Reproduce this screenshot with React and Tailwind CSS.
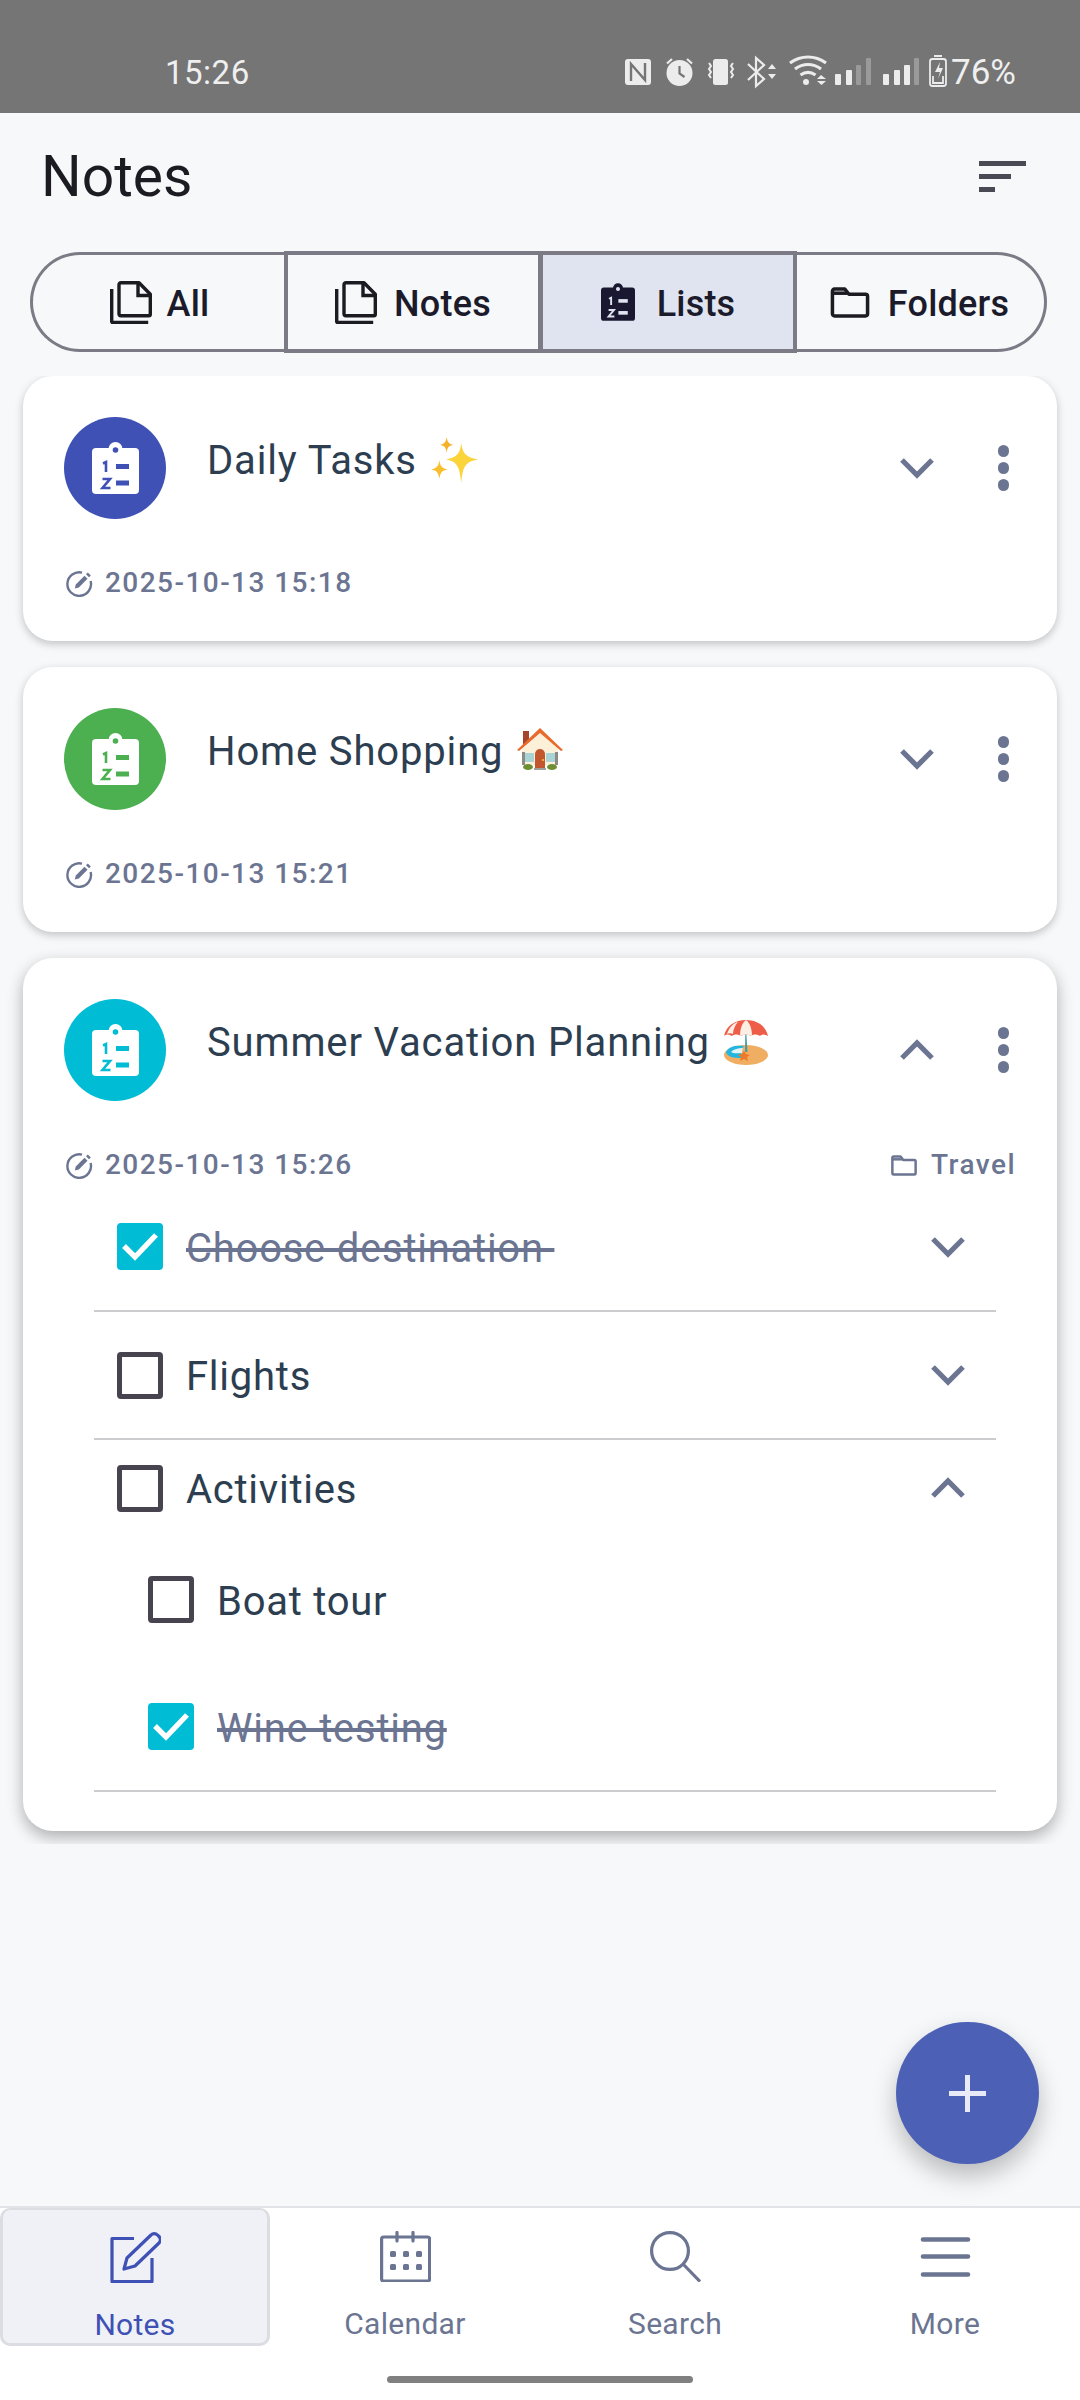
import React from "react";

const C = "#6b7592";

function ClipIcon({ fg, bg, w = 47, h = 52 }) {
  return (
    <svg width={w} height={h} viewBox="0 0 47 52" fill="none">
      <rect x="0" y="6" width="47" height="46" rx="4" fill={fg} />
      <circle cx="23.5" cy="7" r="7" fill={fg} />
      <circle cx="23.5" cy="8" r="2.8" fill={bg} />
      <path d="M11 21.5l3-1.5v10" stroke={bg} strokeWidth="2.6" />
      <path d="M10.5 37h7.5l-7.5 9h8" stroke={bg} strokeWidth="2.6" />
      <rect x="24" y="22" width="13" height="5" fill={bg} />
      <rect x="24" y="38.5" width="13" height="5" fill={bg} />
    </svg>
  );
}

function DocIcon() {
  return (
    <svg width="42" height="43" viewBox="0 0 42 43" fill="none" stroke="#1c1b21" strokeWidth="3.4">
      <path d="M1.7 8v32.5a1 1 0 0 0 1 1h35.5" />
      <path d="M11 1.7h18l11.3 11.5v20a1.6 1.6 0 0 1-1.6 1.6H11a2 2 0 0 1-2-2V3.7a2 2 0 0 1 2-2z" strokeLinejoin="round" />
      <path d="M28 2v12.5h12" />
    </svg>
  );
}

function FolderIcon({ color = "#1c1b21", w = 40, h = 31, sw = 3.4 }) {
  return (
    <svg width={w} height={h} viewBox="0 0 38 30" fill="none" stroke={color} strokeWidth={sw} strokeLinejoin="round">
      <path d="M2 4a2 2 0 0 1 2-2h10l4 5h16a2 2 0 0 1 2 2v17a2 2 0 0 1-2 2H4a2 2 0 0 1-2-2z" />
      <path d="M3 6h14" />
    </svg>
  );
}

function Segment({ icon, label, className, gap = "gap-[15px]" }) {
  return (
    <div className={`h-[100px] flex items-center justify-center border-[3px] border-[#7b7a85] ${gap} ${className}`}>
      {icon}
      <span className="mt-[4px] text-[36px] font-medium text-[#1c1b2b] leading-none tracking-[0.2px]">{label}</span>
    </div>
  );
}

function Chevron({ up }) {
  return (
    <svg width="34" height="22" viewBox="0 0 34 22" fill="none" stroke={C} strokeWidth="5.2" className="shrink-0">
      <path d={up ? "M2 19L17 4l15 15" : "M2 3l15 15L32 3"} />
    </svg>
  );
}

function Dots() {
  return (
    <div className="flex flex-col gap-[5.5px] shrink-0">
      <div className="w-[11.5px] h-[11.5px] rounded-full bg-[#6b7592]" />
      <div className="w-[11.5px] h-[11.5px] rounded-full bg-[#6b7592]" />
      <div className="w-[11.5px] h-[11.5px] rounded-full bg-[#6b7592]" />
    </div>
  );
}

function EditedIcon() {
  return (
    <svg width="27" height="27" viewBox="0 0 27 27" fill="none" stroke={C} className="shrink-0">
      <path d="M16 2.600A11.800 11.800 0 1 0 24.600 11" strokeWidth="2.400" />
      <path d="M8.800 18.400l1-4L18.500 5.700l3 3-8.700 8.700z" fill={C} stroke="none" />
      <path d="M20 4.200l1.800-1.800 3 3-1.800 1.800z" fill={C} stroke="none" />
    </svg>
  );
}

function Sparkles() {
  return (
    <svg width="48" height="46" viewBox="0 0 46 44">
      <path d="M29 6c1.3 10 4.5 13.4 16 15.5C33.500 23.600 30.600 27 29 44c-1.600-17-4.500-20.400-14.500-22.500C25 19.400 27.700 16 29 6z" fill="#fbd43c" />
      <path d="M15 0c.8 5 2 6.500 6.500 7.500C17 8.500 15.800 10 15 15c-.8-5-2-6.500-6.500-7.500C13 6.500 14.200 5 15 0z" fill="#f6b12a" />
      <path d="M8 22c.9 6 2.300 7.800 8 9-5.700 1.200-7.100 3-8 9-.9-6-2.300-7.800-8-9 5.700-1.200 7.100-3 8-9z" fill="#f8bf2f" />
    </svg>
  );
}

function House() {
  return (
    <svg width="46" height="42" viewBox="0 0 46 42">
      <rect x="6" y="3" width="6" height="14" fill="#a5452a" />
      <path d="M5 20L23 4l18 16v17H5z" fill="#fdf0d8" />
      <rect x="5" y="24" width="3" height="13" fill="#8c8a82" />
      <rect x="38" y="24" width="3" height="13" fill="#8c8a82" />
      <path d="M0 22L23 0l23 22-2 1L23 5 2 23z" fill="#ea6a2d" />
      <rect x="8" y="25" width="9" height="9" fill="#a8d4d8" />
      <rect x="29" y="25" width="9" height="9" fill="#a8d4d8" />
      <path d="M18 40V26a5 5 0 0 1 10 0v14z" fill="#c2562f" />
      <circle cx="26" cy="32" r="1" fill="#f8c63d" />
      <ellipse cx="11" cy="39" rx="5" ry="3" fill="#6c8f33" />
      <ellipse cx="35" cy="39" rx="5" ry="3" fill="#6c8f33" />
      <rect x="17" y="40" width="12" height="2" fill="#a0a09a" />
    </svg>
  );
}

function Beach() {
  return (
    <svg width="44" height="46" viewBox="0 0 44 46">
      <ellipse cx="22" cy="36" rx="22" ry="10" fill="#f0ae62" />
      <path d="M2 33c3-6 10-7 18-6-3 3-2 7-3 12C10 39 3 38 2 33z" fill="#25b6e0" />
      <path d="M7 33c3-3 7-4 12-4-1 2-1 3-1 5-4 0-8 1-11-1z" fill="#e4f4f4" />
      <path d="M21.500 0l-.5 33h2.500z" fill="#4a9aa4" />
      <path d="M0 17C2 7 11 1 22 1s20 6 22 16c-3-2-6-2-8 0-3-2-7-2-9 0-3-2-7-2-10 0-3-2-7-2-9 0-3-2-6-2-8 0z" fill="#ee5d47" />
      <path d="M16 17c0-7 2-13 6-16 4 3 6 9 6 16-4-2-8-2-12 0zM3 15C5 9 9 4 14 3c-3 3-5 8-5 12-2-1-4-1-6 0z" fill="#fbeee2" />
      <path d="M14 36l4-1 2-3 2 3 4 1-3 2 1 4-4-2-4 2 1-4z" fill="#ee7a28" />
    </svg>
  );
}

function Card({ color, title, emoji, date, expanded, folder, children }) {
  return (
    <div className={`bg-white rounded-[30px] pt-[41px] pl-[41px] pr-[47px] mx-[23px] ${expanded ? "pb-[39px] shadow-[0_6px_16px_rgba(0,0,0,0.3)]" : "pb-[42px] shadow-[0_3px_9px_rgba(0,0,0,0.22)]"}`}>
      <div className="flex items-center">
        <div className="w-[102px] h-[102px] rounded-full flex items-center justify-center shrink-0" style={{ backgroundColor: color }}>
          <ClipIcon fg="#fff" bg={color} />
        </div>
        <div className="flex-1 self-start pt-[20px] pl-[41px] flex items-start gap-[14px]">
          <span className="text-[40px] leading-[48px] text-[#2c3e50] tracking-[0.85px]">{title}</span>
          <span className="shrink-0">{emoji}</span>
        </div>
        <Chevron up={expanded} />
        <div className="w-[65px]" />
        <div className="-ml-[1px] mr-[1px]"><Dots /></div>
      </div>
      <div className="mt-[48px] h-[32px] flex items-center text-[28px] font-medium text-[#6b7592] tracking-[1.45px]">
        <div className="ml-[2px]"><EditedIcon /></div>
        <span className="ml-[12px] flex-1">{date}</span>
        {folder && (
          <div className="flex items-center gap-[14px] -mr-[6px]">
            <FolderIcon color={C} w={26} h={21} sw={3.6} />
            <span>{folder}</span>
          </div>
        )}
      </div>
      {children}
    </div>
  );
}

function Box({ checked }) {
  if (checked) {
    return (
      <div className="w-[46px] h-[47px] rounded-[4px] bg-[#00bcd4] flex items-center justify-center shrink-0">
        <svg width="38" height="32" viewBox="0 0 38 32" fill="none" stroke="#fff" strokeWidth="5.4">
          <path d="M3 15l11 11L35 4" />
        </svg>
      </div>
    );
  }
  return <div className="w-[46px] h-[47px] rounded-[4px] border-[5px] border-[#47444f] shrink-0" />;
}

function Row({ label, checked, chevron, className, indent }) {
  return (
    <div className={`flex items-center pr-[31px] ${indent ? "pl-[54px]" : "pl-[23px]"} ${className}`}>
      <Box checked={checked} />
      <span className={`ml-[23px] flex-1 mt-[4px] text-[40px] leading-[48px] tracking-[0.75px] ${checked ? "text-[#6b7592] line-through" : "text-[#2c3e50]"}`}>{label}</span>
      {chevron}
    </div>
  );
}

function NavTab({ icon, label, active }) {
  return (
    <div className={`h-[138px] flex flex-col items-center pt-[21px] ${active ? "bg-[#f0f1f6] border-[3px] border-t-[2px] border-[#dcdde2] rounded-[10px] -mt-[1px]" : ""}`}>
      <div className="h-[52px] flex items-center justify-center">{icon}</div>
      <span className={`mt-[25px] text-[30px] leading-[34px] tracking-[0.3px] ${active ? "text-[#3f51b5]" : "text-[#6b7592]"}`}>{label}</span>
    </div>
  );
}

export default function App() {
  return (
    <div className="w-[1080px] h-[2400px] relative overflow-hidden flex flex-col bg-[#f6f8fa] font-['Roboto',sans-serif]">
      {/* Status bar */}
      <div className="h-[113px] shrink-0 bg-[#757575] flex items-start text-[#efefef] pt-[54px] pl-[165px] pr-[64px]">
        <span className="text-[33px] leading-[38px] tracking-[0.5px]">15:26</span>
        <svg className="ml-auto" width="325" height="36" viewBox="627 54 325 36" fill="none">
          {/* NFC */}
          <rect x="627" y="59" width="26" height="26" rx="3" fill="#ececec" />
          <path d="M633 81V64l14 16V63" stroke="#757575" strokeWidth="2.4" />
          {/* alarm */}
          <circle cx="681.500" cy="73" r="13" fill="#ececec" />
          <path d="M681.500 66v7.500l5 3.500" stroke="#757575" strokeWidth="2.2" />
          <path d="M669 63.500l5-4.500M694 63.500l-5-4.500" stroke="#ececec" strokeWidth="2.2" />
          {/* vibrate */}
          <rect x="715" y="59" width="15" height="26" rx="2.500" fill="#ececec" />
          <path d="M711 63l2 3-2 3 2 3-2 3 2 3M735 63l-2 3 2 3-2 3 2 3-2 3" stroke="#ececec" strokeWidth="2" />
          {/* bluetooth */}
          <path d="M750 64l16 15-8 7V58l8 7-16 15" stroke="#ececec" strokeWidth="2.2" />
          <path d="M770 69l4-5 4 5zM770 74l4 5 4-5z" fill="#ececec" />
          {/* wifi */}
          <path d="M792 63c11-8 25-8 36 0" stroke="#ececec" strokeWidth="3.200" />
          <path d="M797 69c8-6 18-6 26 0" stroke="#ececec" strokeWidth="3.200" />
          <path d="M802.500 75c5-3.500 10-3.500 15 0" stroke="#ececec" strokeWidth="3.200" />
          <circle cx="808" cy="82" r="3" fill="#ececec" />
          <path d="M819 79l4-4 5 4zM819 81l4.500 4 4.500-4z" fill="#ececec" />
          {/* signal 1 */}
          <rect x="837" y="74" width="6" height="11" rx="1" fill="#ececec" />
          <rect x="848" y="70" width="6" height="15" rx="1" fill="#ececec" />
          <rect x="858" y="65" width="5" height="20" rx="1" fill="#9a9a9a" />
          <rect x="868" y="58" width="5" height="27" rx="1" fill="#9a9a9a" />
          {/* signal 2 */}
          <rect x="885" y="74" width="6" height="11" rx="1" fill="#ececec" />
          <rect x="896" y="70" width="6" height="15" rx="1" fill="#ececec" />
          <rect x="906" y="65" width="6" height="20" rx="1" fill="#ececec" />
          <rect x="916" y="58" width="5" height="27" rx="1" fill="#9a9a9a" />
          {/* battery */}
          <rect x="932" y="59" width="16" height="27" rx="2.500" stroke="#ececec" strokeWidth="1.800" />
          <rect x="936" y="55" width="8" height="2" fill="#ececec" />
          <path d="M942 62l-5 10h5l-2 7 5-11h-4z" fill="#ececec" />
          <path d="M935 76v7h10v-7" stroke="#ececec" strokeWidth="1.800" />
        </svg>
        <span className="ml-[1px] text-[35px] leading-[38px]">76%</span>
      </div>

      {/* Header */}
      <div className="h-[139px] shrink-0 flex items-start pl-[41px] pr-[54px]">
        <span className="mt-[32px] text-[57px] leading-[64px] text-[#1c1b21] flex-1">Notes</span>
        <svg className="mt-[48px]" width="47" height="31" viewBox="0 0 47 31" fill="#4a4a55">
          <rect width="47" height="5" />
          <rect y="13" width="32" height="5" />
          <rect y="26" width="16" height="5" />
        </svg>
      </div>

      {/* Segmented */}
      <div className="h-[100px] shrink-0 ml-[30px] mr-[33px] flex">
        <Segment className="w-[256px] rounded-l-[50px] border-r-0 -mr-[1px]" icon={<DocIcon />} label="All" />
        <Segment className="w-[256px] -mr-[1px] outline outline-[1px] outline-[#7b7a85]" gap="gap-[17px]" icon={<DocIcon />} label="Notes" />
        <Segment className="w-[256px] bg-[#dfe4f0] -mr-[1px] outline outline-[1px] outline-[#7b7a85]" gap="gap-[22px]" icon={<ClipIcon fg="#1a1830" bg="#dfe4f0" w={34} h={38} />} label="Lists" />
        <Segment className="flex-1 rounded-r-[50px] border-l-0" gap="gap-[18px]" icon={<FolderIcon />} label="Folders" />
      </div>

      {/* List */}
      <div className="h-[1468px] mt-[24px] overflow-hidden flex flex-col gap-[26px] shrink-0">
        <Card color="#3f51b5" title="Daily Tasks" emoji={<Sparkles />} date="2025-10-13 15:18" />
        <Card color="#4caf50" title="Home Shopping" emoji={<House />} date="2025-10-13 15:21" />
        <Card color="#00bcd4" title="Summer Vacation Planning" emoji={<Beach />} date="2025-10-13 15:26" folder="Travel" expanded>
          <div className="mt-[2px] ml-[30px] mr-[14px]">
            <Row className="h-[129px] border-b-[2px] border-[#cccccf]" label={"Choose destination\u00A0"} checked chevron={<Chevron />} />
            <Row className="h-[128px] border-b-[2px] border-[#cccccf]" label="Flights" chevron={<Chevron />} />
            <Row className="h-[96px]" label="Activities" chevron={<Chevron up />} />
            <Row className="h-[127px]" indent label="Boat tour" />
            <Row className="h-[129px] border-b-[2px] border-[#cccccf]" indent label="Wine testing" checked />
          </div>
        </Card>
      </div>

      {/* FAB */}
      <div className="absolute left-[896px] top-[2022px] w-[143px] h-[142px] rounded-full bg-[#4c60b6] shadow-[0_12px_24px_rgba(0,0,0,0.25)] flex items-center justify-center">
        <svg width="37" height="37" viewBox="0 0 37 37" fill="#e8eafa">
          <rect x="16" width="5" height="37" />
          <rect y="16" width="37" height="5" />
        </svg>
      </div>

      {/* Bottom nav */}
      <div className="mt-auto h-[194px] shrink-0 bg-white border-t-[2px] border-[#e2e3e6]">
        <div className="grid grid-cols-4 pt-[1px]">
          <NavTab
            active
            label="Notes"
            icon={
              <svg width="51" height="51" viewBox="0 0 51 51" fill="none" stroke="#3f51b5" strokeWidth="3.200" strokeLinejoin="round">
                <path d="M24 6.500H2v43h40V26" />
                <path d="M14 37l3-11L41 3a4.500 4.500 0 0 1 6.500 0l1.500 1.500a4.500 4.500 0 0 1 0 6.500L25 34z" />
              </svg>
            }
          />
          <NavTab
            label="Calendar"
            icon={
              <svg width="51" height="51" viewBox="0 0 51 51" fill="none" stroke={C} strokeWidth="3.200" strokeLinecap="round">
                <rect x="1.600" y="6" width="48" height="44" rx="2" />
                <path d="M17 1.500V10M33 1.500V10" />
                <g fill={C} stroke="none">
                  <rect x="10" y="20" width="6" height="6" rx="1.500" />
                  <rect x="23" y="20" width="6" height="6" rx="1.500" />
                  <rect x="36" y="20" width="6" height="6" rx="1.500" />
                  <rect x="10" y="33" width="6" height="6" rx="1.500" />
                  <rect x="23" y="33" width="6" height="6" rx="1.500" />
                  <rect x="36" y="33" width="6" height="6" rx="1.500" />
                </g>
              </svg>
            }
          />
          <NavTab
            label="Search"
            icon={
              <svg width="51" height="51" viewBox="0 0 51 51" fill="none" stroke={C} strokeWidth="3.200">
                <circle cx="20" cy="20" r="18.400" />
                <path d="M33 33l17 17.500" />
              </svg>
            }
          />
          <NavTab
            label="More"
            icon={
              <svg width="51" height="51" viewBox="0 0 51 51" fill="none" stroke={C} strokeWidth="4.600" strokeLinecap="round">
                <path d="M3 8.500h45M3 25.500h45M3 43.500h45" />
              </svg>
            }
          />
        </div>
        <div className="mt-[29px] mx-auto w-[306px] h-[7px] rounded-full bg-[#808080]" />
      </div>
    </div>
  );
}
